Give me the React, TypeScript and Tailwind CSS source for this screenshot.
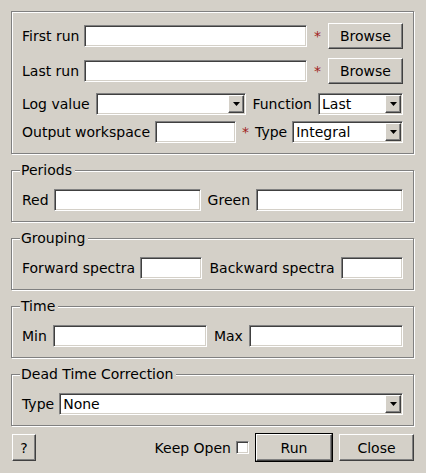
import React from "react";

const sunken =
  "border border-t-[#808080] border-l-[#808080] border-b-white border-r-white shadow-[inset_1px_1px_0_#404040,inset_-1px_-1px_0_#d4d0c8] bg-white";
const raised =
  "border border-t-white border-l-white border-b-[#404040] border-r-[#404040] shadow-[inset_-1px_-1px_0_#808080] bg-[#d4d0c8]";
const etched = "border border-[#808080] shadow-[inset_1px_1px_0_#fff,1px_1px_0_#fff]";

function Input({ className = "" }: { className?: string }) {
  return <div className={`${sunken} h-[22px] ${className}`} />;
}

function Combo({ value = "", className = "" }: { value?: string; className?: string }) {
  return (
    <div className={`${sunken} h-[22px] flex items-stretch p-[1px] ${className}`}>
      <span className="flex-1 pl-[2px] flex items-center whitespace-nowrap overflow-hidden">{value}</span>
      <span className={`${raised} w-[16px] flex items-center justify-center`}>
        <svg width="7" height="4" viewBox="0 0 7 4">
          <polygon points="0,0 7,0 3.5,4" fill="#000" />
        </svg>
      </span>
    </div>
  );
}

function Star({ w }: { w: string }) {
  return <span className={`${w} mx-[6px] text-center text-[#a02020] shrink-0`}>*</span>;
}

function Button({ label, className = "" }: { label: string; className?: string }) {
  return (
    <button className={`${raised} flex items-center justify-center shrink-0 ${className}`}>{label}</button>
  );
}

function Group({ title, children }: { title: string; children: React.ReactNode }) {
  return (
    <fieldset className={`${etched} mt-[8px] px-[10px] pt-[11px] pb-[10px] min-w-0`}>
      <legend className="-ml-[2px] pl-[1px] pr-[3px] bg-[#d4d0c8] leading-[16px]">{title}</legend>
      <div className="flex items-center h-[22px]">{children}</div>
    </fieldset>
  );
}

export default function App() {
  return (
    <div className="w-[426px] h-[473px] bg-[#d4d0c8] pt-[11px] pl-[11px] pr-[12px] text-[14px] leading-[16px] text-black font-['DejaVu_Sans',sans-serif] overflow-hidden">
      <div className={`${etched} h-[143px] px-[10px] pt-[11px] flex flex-col`}>
        <div className="flex items-center h-[26px]">
          <span className="shrink-0 mr-[5px]">First run</span>
          <Input className="flex-1" />
          <Star w="w-[9px]" />
          <Button label="Browse" className="w-[75px] h-[26px]" />
        </div>
        <div className="flex items-center h-[26px] mt-[9px]">
          <span className="shrink-0 mr-[5px]">Last run</span>
          <Input className="flex-1" />
          <Star w="w-[9px]" />
          <Button label="Browse" className="w-[75px] h-[26px]" />
        </div>
        <div className="flex items-center h-[22px] mt-[9px]">
          <span className="shrink-0 mr-[6px]">Log value</span>
          <Combo className="flex-1" />
          <span className="shrink-0 ml-[6px] mr-[6px]">Function</span>
          <Combo value="Last" className="w-[85px]" />
        </div>
        <div className="flex items-center h-[22px] mt-[6px]">
          <span className="shrink-0 mr-[5px]">Output workspace</span>
          <Input className="w-[81px] shrink-0" />
          <Star w="w-[7px]" />
          <span className="shrink-0 mr-[5px]">Type</span>
          <Combo value="Integral" className="flex-1" />
        </div>
      </div>

      <Group title="Periods">
        <span className="shrink-0 mr-[5px]">Red</span>
        <Input className="flex-1" />
        <span className="shrink-0 ml-[7px] mr-[6px]">Green</span>
        <Input className="flex-1" />
      </Group>

      <Group title="Grouping">
        <span className="shrink-0 mr-[5px]">Forward spectra</span>
        <Input className="flex-1" />
        <span className="shrink-0 ml-[7px] mr-[6px]">Backward spectra</span>
        <Input className="flex-1" />
      </Group>

      <Group title="Time">
        <span className="shrink-0 mr-[6px]">Min</span>
        <Input className="flex-1" />
        <span className="shrink-0 ml-[7px] mr-[6px]">Max</span>
        <Input className="flex-1" />
      </Group>

      <Group title="Dead Time Correction">
        <span className="shrink-0 mr-[5px]">Type</span>
        <Combo value="None" className="flex-1" />
      </Group>

      <div className="flex items-center h-[29px] mt-[7px]">
        <Button label="?" className="w-[24px] h-[27px] ml-[1px]" />
        <div className="flex-1" />
        <span className="mr-[5px]">Keep Open</span>
        <div className={`${sunken} w-[13px] h-[13px] mr-[6px]`} />
        <button className="border border-black w-[78px] h-[29px] p-0 shrink-0 flex">
          <span className={`${raised} flex-1 flex items-center justify-center`}>Run</span>
        </button>
        <Button label="Close" className="w-[75px] h-[27px] ml-[6px]" />
      </div>
    </div>
  );
}
